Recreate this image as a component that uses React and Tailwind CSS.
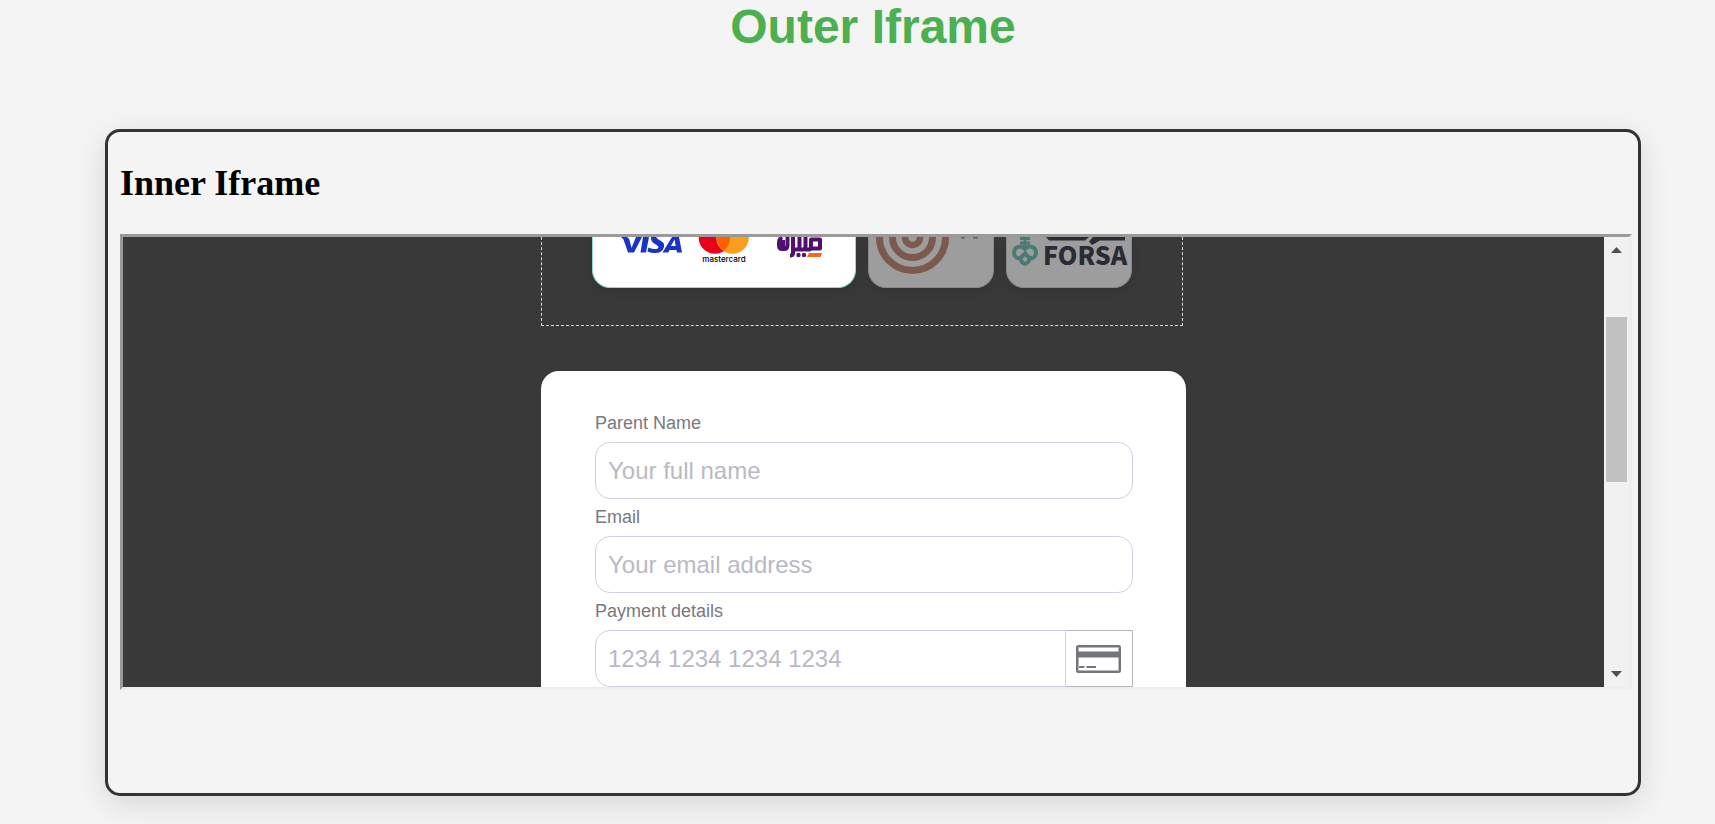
import clsx from "clsx";

function VisaLogo() {
  return (
    <svg width="62" height="16" viewBox="0 0 62 16" fill="#1a34c8" aria-label="Visa">
      <path d="M0 0H6Q8 1 8.500 3L10.500 11L15 0H21L13 15.500H7L2.500 2.500Z" />
      <path d="M22 0H28L25 15.500H19.500Z" />
      <path d="M30 0H35Q36 2 40 4Q44 6 43 10Q41.500 16 34 16Q30 16 26.500 14.500L27.500 10.500Q31 12 34 12Q37.500 12 37.500 10Q37 8.500 34 7Q29.500 5 30 0Z" />
      <path fillRule="evenodd" d="M51 0H58L61 15.500H56L55.400 13H48.500L47.300 15.500H41.500ZM50 9H54.700L53.500 2.500Z" />
    </svg>
  );
}

function MastercardLogo() {
  return (
    <div className="flex w-[52px] flex-col items-center">
      <svg width="52" height="17" viewBox="0 0 52 17" aria-hidden="true">
        <circle cx="17" cy="0.500" r="16.300" fill="#eb001b" />
        <circle cx="34.500" cy="0.500" r="16.300" fill="#f79e1b" />
        <path d="M19 0H32Q32 9 25.700 14.300Q19.500 9 19 0Z" fill="#ff5f00" />
      </svg>
      <span className="font-['Inter',sans-serif] text-[8px] leading-[10px] font-medium text-black">mastercard</span>
    </div>
  );
}

function MeezaLogo() {
  return (
    <svg width="46" height="21" viewBox="0 0 46 21" fill="none" aria-label="Meeza">
      <path
        d="M2 6Q2 2 5 0M2 5V8Q2 12 5 12H7Q10.500 12 10.500 8V0M6 3V12M16 0V16Q16 18.500 13 18.500M16 12.500H20Q22.500 12.500 22.500 9V0M22 12.500H26Q28.500 12.500 28.500 9V0M28 12.500H32Q34 12.500 34 9V2.500H43V11.500H33"
        stroke="#500f73"
        strokeWidth="4"
        strokeLinejoin="round"
      />
      <g fill="#500f73">
        <circle cx="21.500" cy="18" r="2.200" />
        <circle cx="27" cy="18" r="2.200" />
      </g>
      <path d="M32 16H45L43.500 20H30Z" fill="#f26a21" />
    </svg>
  );
}

function TargetLogo() {
  return (
    <svg width="124" height="38" viewBox="0 0 124 38" fill="none" stroke="#7b594c" aria-hidden="true">
      <circle cx="43.500" cy="0.500" r="33" strokeWidth="7" />
      <circle cx="43.500" cy="0.500" r="20" strokeWidth="7" />
      <circle cx="43.500" cy="0.500" r="7.500" strokeWidth="6.500" />
      <path d="M92 0.500H96M104 0.500H109" strokeWidth="2" />
    </svg>
  );
}

function ForsaLogo() {
  return (
    <div className="flex gap-1 pl-[5px]">
      <svg width="27" height="30" viewBox="0 0 27 30" fill="none" stroke="#497a74" strokeWidth="4" aria-hidden="true">
        <path d="M13 0V12M8 1.500H18M8 6H18" strokeWidth="3" />
        <path d="M13 12C10 8 2 9 2 16C2 20 6 22 8.500 21C9 28.500 17 28.500 17.500 21C20 22 24 20 24 16C24 9 16 8 13 12Z" />
        <path d="M8.500 21L13 16.500L17.500 21" />
      </svg>
      <div className="flex flex-col">
        <svg className="overflow-visible" width="84" height="6" viewBox="0 0 84 6" fill="#2b2b35" aria-hidden="true">
          <path d="M3 0H46L42 3.500H6ZM50 0H82V3.500H57L49 8L46 4.500Z" />
        </svg>
        <span className="text-left font-['Noto_Sans_CJK_SC',sans-serif] text-[25px] leading-[22px] font-black text-[#2b2b35]">
          FORSA
        </span>
      </div>
    </div>
  );
}

function CardIcon() {
  return (
    <svg width="45" height="28" viewBox="0 0 45 28" fill="none" stroke="#72767c" aria-hidden="true">
      <rect x="1" y="1" width="43" height="26" rx="1.500" strokeWidth="2" />
      <rect x="2.500" y="2.500" width="40" height="23" strokeWidth="1" strokeOpacity="0.5" />
      <path d="M1 9.500H44" strokeWidth="6" />
      <path d="M3 22H8.500M10.500 22H20" strokeWidth="2" />
    </svg>
  );
}

function MethodCard({ active, label, children }) {
  return (
    <button
      type="button"
      aria-label={label}
      className={clsx(
        "flex h-[51px] items-start overflow-hidden rounded-b-[18px] border border-t-0 shadow-[0_4px_12px_rgba(0,0,0,0.1)]",
        active ? "w-[264px] gap-[15px] border-[#8fdcd4] bg-white pl-[28px]" : "w-[126px] border-[#8a8a8a] bg-[#9d9d9d]"
      )}
    >
      {children}
    </button>
  );
}

function Field({ id, label, placeholder, addon }) {
  return (
    <div className="flex flex-col">
      <label htmlFor={id} className="flex h-[37px] items-center pb-[2px] text-[18px] leading-6 text-[#78787f]">
        {label}
      </label>
      <div className="flex">
        <input
          id={id}
          type="text"
          placeholder={placeholder}
          className={clsx(
            "h-[57px] min-w-0 flex-1 border border-[#d0d0e2] bg-white px-3 text-[24px] placeholder:text-[#b9b9c5]",
            addon ? "rounded-l-[15px]" : "rounded-[15px]"
          )}
        />
        {addon}
      </div>
    </div>
  );
}

function ScrollBar() {
  return (
    <div className="flex w-[25px] shrink-0 flex-col items-center bg-[#f1f1f1] py-[10px]">
      <svg width="11" height="6" viewBox="0 0 11 6" fill="#505050" aria-hidden="true">
        <path d="M0 6L5.500 0L11 6Z" />
      </svg>
      <div className="mt-16 h-[165px] w-[21px] bg-[#c1c1c1]" />
      <svg className="mt-auto" width="11" height="6" viewBox="0 0 11 6" fill="#505050" aria-hidden="true">
        <path d="M0 0L5.500 6L11 0Z" />
      </svg>
    </div>
  );
}

export default function App() {
  return (
    <div className="min-h-screen bg-[#f4f4f4] pr-[74px] pb-7 pl-[105px] font-['Liberation_Sans',sans-serif]">
      <h1 className="pb-[75px] text-center text-[48px] leading-[54px] font-bold text-[#4caf50]">Outer Iframe</h1>

      <section className="rounded-[15px] border-3 border-[#333] pr-[6px] pb-[103px] pl-3 shadow-[0_8px_30px_rgba(0,0,0,0.12)]">
        <h2 className="pt-[31px] pb-[31px] font-['Liberation_Serif',serif] text-[36px] leading-10 font-bold text-black">
          Inner Iframe
        </h2>

        <div className="flex h-[456px] overflow-hidden border-3 border-t-[#9a9a9a] border-r-[#ededed] border-b-[#ededed] border-l-[#9a9a9a]">
          <div className="flex flex-1 flex-col items-center overflow-hidden bg-[#393939]">
            <div className="w-[645px] shrink-0 pr-[3px]">
              <div className="flex h-[89px] items-start gap-3 border border-t-0 border-dashed border-[#ddd] pl-[50px]">
                <MethodCard active label="Card">
                  <VisaLogo />
                  <MastercardLogo />
                  <span className="ml-3">
                    <MeezaLogo />
                  </span>
                </MethodCard>
                <MethodCard label="Installments">
                  <TargetLogo />
                </MethodCard>
                <MethodCard label="Forsa">
                  <ForsaLogo />
                </MethodCard>
              </div>
            </div>

            <form className="mt-[45px] flex w-[645px] shrink-0 flex-col rounded-t-[18px] bg-white pt-[34px] pr-[53px] pl-[54px]">
              <Field id="parent" label="Parent Name" placeholder="Your full name" />
              <Field id="email" label="Email" placeholder="Your email address" />
              <Field
                id="card"
                label="Payment details"
                placeholder="1234 1234 1234 1234"
                addon={
                  <span className="flex w-[67px] items-center justify-center border border-l-0 border-[#b5b5ba] pr-[2px]">
                    <CardIcon />
                  </span>
                }
              />
            </form>
          </div>
          <ScrollBar />
        </div>
      </section>
    </div>
  );
}
